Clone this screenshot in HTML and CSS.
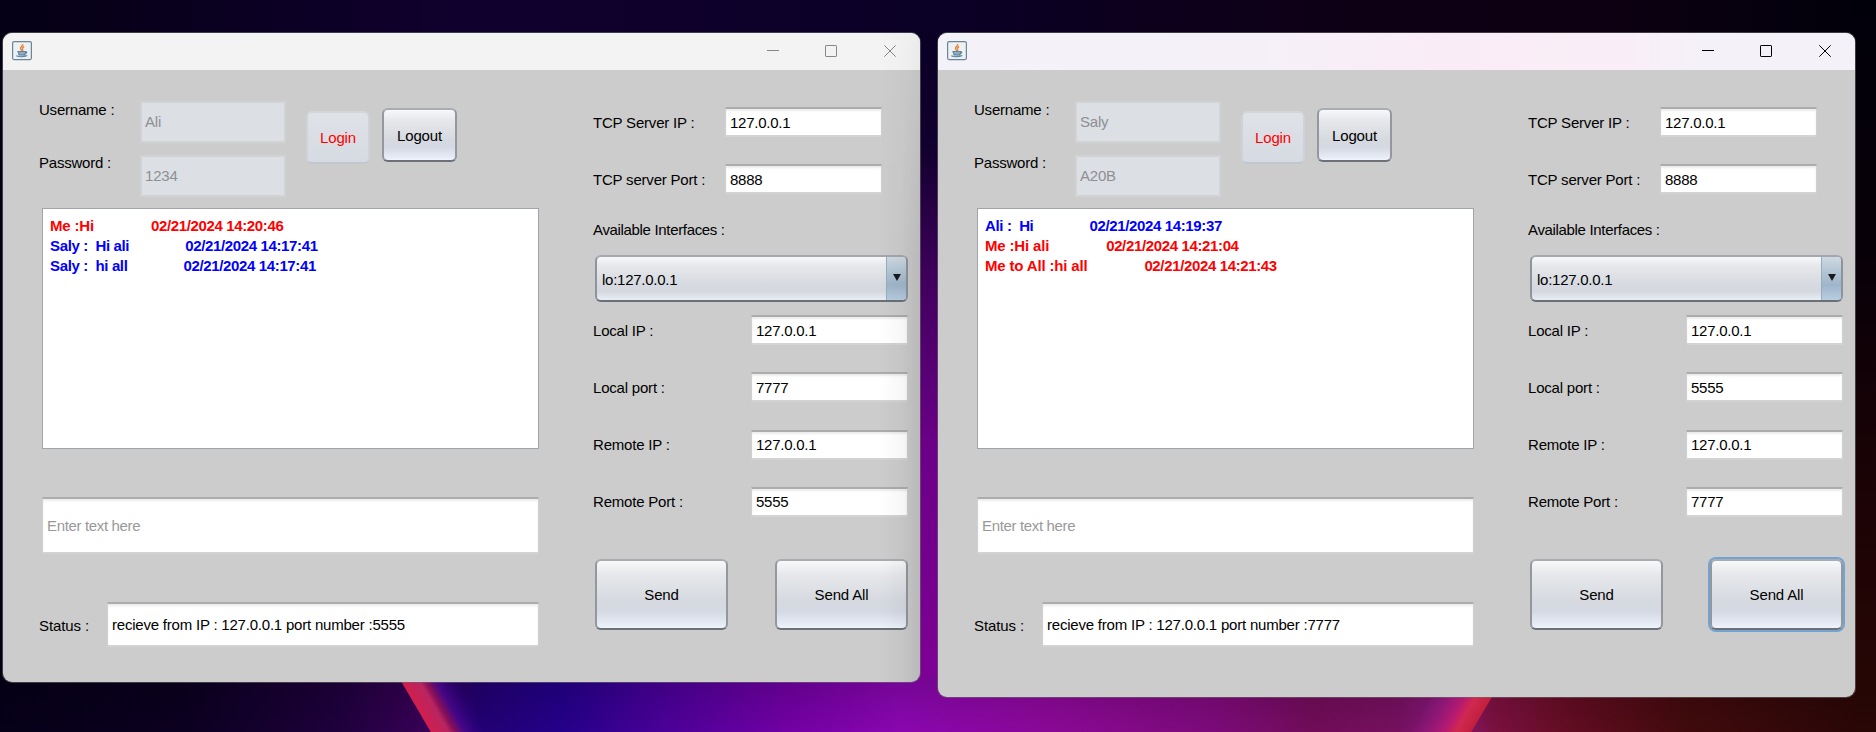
FILE: index.html
```html
<!DOCTYPE html>
<html lang="en">
<head>
<meta charset="utf-8">
<title>Chat</title>
<link rel="stylesheet" href="styles.css">
</head>
<body>
<svg class="wallpaper" width="1876" height="732" viewBox="0 0 1876 732" aria-hidden="true">
  <defs>
    <linearGradient id="top" gradientUnits="userSpaceOnUse" x1="0" x2="1876" y1="0" y2="0">
      <stop offset="0" stop-color="#050014"/><stop offset=".25" stop-color="#10002e"/>
      <stop offset=".5" stop-color="#0b0026"/><stop offset=".7" stop-color="#0d0016"/>
      <stop offset=".85" stop-color="#0d0012"/><stop offset="1" stop-color="#01000a"/>
    </linearGradient>
    <linearGradient id="gap" x1="0" x2="0" y1="0" y2="1">
      <stop offset="0" stop-color="#0a0024"/><stop offset=".18" stop-color="#12002e"/>
      <stop offset=".4" stop-color="#430060"/><stop offset=".65" stop-color="#6c0088"/>
      <stop offset="1" stop-color="#7d0094"/>
    </linearGradient>
    <linearGradient id="side" x1="0" x2="0" y1="0" y2="1">
      <stop offset="0" stop-color="#01000a"/><stop offset=".35" stop-color="#080008"/>
      <stop offset=".7" stop-color="#1d0305"/><stop offset="1" stop-color="#280705"/>
    </linearGradient>
    <linearGradient id="floor" gradientUnits="userSpaceOnUse" x1="0" x2="1876" y1="0" y2="0">
      <stop offset="0" stop-color="#060018"/><stop offset=".1" stop-color="#0b0020"/>
      <stop offset=".18" stop-color="#1e003c"/><stop offset=".23" stop-color="#3a0058"/>
      <stop offset=".255" stop-color="#220072"/><stop offset=".3" stop-color="#24008a"/>
      <stop offset=".35" stop-color="#480098"/><stop offset=".42" stop-color="#7200a4"/>
      <stop offset=".48" stop-color="#8a06b0"/><stop offset=".56" stop-color="#8a0896"/>
      <stop offset=".65" stop-color="#7c0a78"/><stop offset=".7" stop-color="#700c58"/>
      <stop offset=".745" stop-color="#75105f"/><stop offset=".775" stop-color="#8a1880"/>
      <stop offset=".795" stop-color="#7c1040"/><stop offset=".84" stop-color="#600c20"/>
      <stop offset=".9" stop-color="#400a0c"/><stop offset="1" stop-color="#280606"/>
    </linearGradient>
    <linearGradient id="shade" x1="0" x2="0" y1="0" y2="1">
      <stop offset="0" stop-color="#000" stop-opacity=".16"/><stop offset="1" stop-color="#000" stop-opacity="0"/>
    </linearGradient>
    <linearGradient id="arcLeft" gradientUnits="userSpaceOnUse" x1="415" y1="707" x2="461" y2="681">
      <stop offset="0" stop-color="#d41d4c"/><stop offset=".32" stop-color="#b82560"/>
      <stop offset=".42" stop-color="#8a1058"/><stop offset=".6" stop-color="#4a0890" stop-opacity=".8"/>
      <stop offset="1" stop-color="#240088" stop-opacity="0"/>
    </linearGradient>
    <linearGradient id="arcRight" gradientUnits="userSpaceOnUse" x1="1482" y1="716" x2="1430" y2="686">
      <stop offset="0" stop-color="#c01f3c"/><stop offset=".25" stop-color="#d02850"/>
      <stop offset=".4" stop-color="#b81a70"/><stop offset="1" stop-color="#7a1880" stop-opacity="0"/>
    </linearGradient>
  </defs>
  <rect width="1876" height="732" fill="url(#top)"/>
  <rect x="1850" y="0" width="26" height="732" fill="url(#side)"/>
  <rect y="676" width="1854" height="56" fill="url(#floor)"/>
  <rect y="676" width="1854" height="56" fill="url(#shade)"/>
  <rect x="912" y="33" width="34" height="644" fill="url(#gap)"/>
  <path d="M398 676 L432 734 H520 L486 676 Z" fill="url(#arcLeft)"/>
  <path d="M1495 692 L1470 734 H1410 L1435 692 Z" fill="url(#arcRight)"/>
</svg>

<main class="desktop">
  <section class="window window-ali">
    <header class="titlebar">
      <svg class="java" viewBox="0 0 20 20"><rect x=".6" y=".6" width="18.8" height="18" rx="1.5" fill="#eef1f3" stroke="#6d8494" stroke-width="1.2"/><path d="M10.8 3.2C11.2 5 7.8 5.700 8.500 7.700C8.800 8.500 9.600 9 9.700 10M12.200 5.500C10.500 6.200 9.900 7 10.700 8.200C11 8.800 10.800 9.400 10.300 9.900" fill="none" stroke="#e78335" stroke-width="1.400"/><path d="M6 10.500h7.500v1.500q0 2-2 2h-3q-2 0-2-2zM13.500 10.500c2.200 0 1.300 2-.8 2.400M4.300 14.800c2.500 1.300 8 1.200 11-.3" fill="#8fabc0" stroke="#5d86a3" stroke-width="1.100"/></svg>
      <div class="controls">
        <svg viewBox="0 0 12 12"><path d="M0 5.500h12"/></svg>
        <svg viewBox="0 0 12 12"><rect x=".5" y=".5" width="11" height="11" rx=".6"/></svg>
        <svg viewBox="0 0 12 12"><path d="M.3.300l11.400 11.400M11.700.3L.3 11.700"/></svg>
      </div>
    </header>
    <div class="content">
      <div class="left">
        <div class="account">
          <div class="names"><span>Username :</span><span>Password :</span></div>
          <div class="creds"><div class="field off">Ali</div><div class="field off">1234</div></div>
          <div class="btn login">Login</div>
          <div class="btn logout">Logout</div>
        </div>
        <div class="log">
          <p class="mine"><span>Me :Hi</span><time>02/21/2024 14:20:46</time></p>
          <p><span>Saly :  Hi ali</span><time>02/21/2024 14:17:41</time></p>
          <p><span>Saly :  hi all</span><time>02/21/2024 14:17:41</time></p>
        </div>
        <div class="field message">Enter text here</div>
        <div class="status"><span>Status :</span><div class="field">recieve from IP : 127.0.0.1 port number :5555</div></div>
      </div>
      <div class="right">
        <div class="row server"><span>TCP Server IP :</span><div class="field num">127.0.0.1</div></div>
        <div class="row server second"><span>TCP server Port :</span><div class="field num">8888</div></div>
        <div class="caption">Available Interfaces :</div>
        <div class="combo"><span class="num">lo:127.0.0.1</span><i><svg viewBox="0 0 9 8"><path d="M0 0h9L4.500 8z"/></svg></i></div>
        <div class="peers">
          <div class="row"><span>Local IP :</span><div class="field num">127.0.0.1</div></div>
          <div class="row"><span>Local port :</span><div class="field num">7777</div></div>
          <div class="row"><span>Remote IP :</span><div class="field num">127.0.0.1</div></div>
          <div class="row"><span>Remote Port :</span><div class="field num">5555</div></div>
        </div>
        <div class="actions"><div class="btn">Send</div><div class="btn">Send All</div></div>
      </div>
    </div>
  </section>

  <section class="window window-saly">
    <header class="titlebar">
      <svg class="java" viewBox="0 0 20 20"><rect x=".6" y=".6" width="18.8" height="18" rx="1.5" fill="#eef1f3" stroke="#6d8494" stroke-width="1.2"/><path d="M10.8 3.2C11.2 5 7.8 5.700 8.500 7.700C8.800 8.500 9.600 9 9.700 10M12.200 5.500C10.500 6.200 9.900 7 10.700 8.200C11 8.800 10.800 9.400 10.300 9.900" fill="none" stroke="#e78335" stroke-width="1.400"/><path d="M6 10.500h7.500v1.500q0 2-2 2h-3q-2 0-2-2zM13.500 10.500c2.200 0 1.300 2-.8 2.400M4.300 14.800c2.500 1.300 8 1.200 11-.3" fill="#8fabc0" stroke="#5d86a3" stroke-width="1.100"/></svg>
      <div class="controls">
        <svg viewBox="0 0 12 12"><path d="M0 5.500h12"/></svg>
        <svg viewBox="0 0 12 12"><rect x=".5" y=".5" width="11" height="11" rx=".6"/></svg>
        <svg viewBox="0 0 12 12"><path d="M.3.300l11.400 11.400M11.700.3L.3 11.700"/></svg>
      </div>
    </header>
    <div class="content">
      <div class="left">
        <div class="account">
          <div class="names"><span>Username :</span><span>Password :</span></div>
          <div class="creds"><div class="field off">Saly</div><div class="field off">A20B</div></div>
          <div class="btn login">Login</div>
          <div class="btn logout">Logout</div>
        </div>
        <div class="log">
          <p><span>Ali :  Hi</span><time>02/21/2024 14:19:37</time></p>
          <p class="mine"><span>Me :Hi ali</span><time>02/21/2024 14:21:04</time></p>
          <p class="mine"><span>Me to All :hi all</span><time>02/21/2024 14:21:43</time></p>
        </div>
        <div class="field message">Enter text here</div>
        <div class="status"><span>Status :</span><div class="field">recieve from IP : 127.0.0.1 port number :7777</div></div>
      </div>
      <div class="right">
        <div class="row server"><span>TCP Server IP :</span><div class="field num">127.0.0.1</div></div>
        <div class="row server second"><span>TCP server Port :</span><div class="field num">8888</div></div>
        <div class="caption">Available Interfaces :</div>
        <div class="combo"><span class="num">lo:127.0.0.1</span><i><svg viewBox="0 0 9 8"><path d="M0 0h9L4.500 8z"/></svg></i></div>
        <div class="peers">
          <div class="row"><span>Local IP :</span><div class="field num">127.0.0.1</div></div>
          <div class="row"><span>Local port :</span><div class="field num">5555</div></div>
          <div class="row"><span>Remote IP :</span><div class="field num">127.0.0.1</div></div>
          <div class="row"><span>Remote Port :</span><div class="field num">7777</div></div>
        </div>
        <div class="actions"><div class="btn">Send</div><div class="btn focused">Send All</div></div>
      </div>
    </div>
  </section>
</main>
</body>
</html>
```

FILE: styles.css
```css
* { box-sizing: border-box; }
body {
  margin: 0;
  width: 1876px;
  height: 732px;
  overflow: hidden;
  background: #0a0020;
  font: 15px/20px "Liberation Sans", Arial, sans-serif;
  color: #000;
}
.wallpaper { position: absolute; top: 0; left: 0; }
.desktop { position: relative; width: 1876px; height: 732px; }

/* windows placed freely on the desktop */
.window {
  position: absolute;
  top: 33px;
  width: 917px;
  border-radius: 9px;
  overflow: hidden;
  background: #ccc;
  box-shadow: 0 0 0 1px rgba(110, 110, 110, .55);
}
.window-ali { left: 3px; height: 649px; }
.window-saly { left: 938px; height: 664px; }
.window-ali::after {
  content: "";
  position: absolute;
  top: 0; right: 0; bottom: 0;
  width: 40px;
  background: linear-gradient(to right, transparent, rgba(0, 0, 0, .03) 55%, rgba(0, 0, 0, .09));
  mask-image: linear-gradient(rgba(0, 0, 0, .3), #000 35%);
}

.titlebar {
  display: flex;
  justify-content: space-between;
  height: 37px;
  padding: 8px 24px 0 9px;
  background: #f3f3f3;
}
.window-saly .titlebar { background: linear-gradient(to right, #f4f2f9, #f5f0f8 35%, #faecf6 55%, #f9eef7 75%, #f5f1f8 82%); }
.java { width: 20px; height: 20px; }
.controls { display: flex; padding-top: 4px; }
.controls svg { width: 12px; height: 12px; fill: none; stroke: #868686; }
.controls svg:nth-child(2) { margin: 0 47px 0 46px; }
.window-saly .controls svg { stroke: #000; }

.content { display: flex; justify-content: space-between; padding: 30px 12px 0 36px; }
.left { width: 500px; }
.right { width: 315px; padding-top: 7px; }

.field {
  display: flex;
  align-items: center;
  padding: 1px 0 0 4px;
  background: #fff;
  border: 1px solid #d0d0d0;
  border-top: 2px solid #acacac;
  border-bottom: 2px solid #d3d3d3;
  box-shadow: inset 0 2px 2px #ececec;
  white-space: nowrap;
  letter-spacing: -.21px;
}
.num { letter-spacing: -.26px; }
.off {
  background: #dce0e5;
  border: 2px solid #d0d2d4;
  box-shadow: none;
  color: #8e8f91;
  padding: 0 0 0 3px;
}

.btn {
  display: flex;
  align-items: center;
  justify-content: center;
  padding-top: 2px;
  border: 2px solid;
  border-color: #a9adb2 #94979d #6c7077;
  border-radius: 6px;
  background: linear-gradient(#f7f8fa, #e6e8eb 20%, #d6d9df 60%, #d5d9e3 75%, #e6eaf4 93%, #f0f3fb);
  letter-spacing: -.15px;
}

.account { display: flex; height: 108px; }
.names { display: grid; grid-auto-rows: 53px; width: 100px; letter-spacing: -.22px; }
.creds { display: flex; flex-direction: column; gap: 12px; width: 146px; margin: 1px 0 0 1px; }
.creds .field { flex: none; height: 42px; }
.login {
  width: 64px;
  height: 53px;
  margin: 11px 0 0 20px;
  padding-top: 0;
  border-color: #d4d6da #cfd2d8 #c2c6cd;
  background: linear-gradient(#dfe2e7, #d6dae2);
  color: #f00;
}
.logout { width: 75px; height: 54px; margin: 8px 0 0 12px; }

.log {
  height: 241px;
  margin-left: 3px;
  padding: 7px;
  background: #fff;
  border: 1px solid #a0a4ab;
  font-weight: 700;
  color: #00f;
}
.log p { margin: 0; white-space: pre; letter-spacing: -.36px; }
.log time { margin-left: 56px; letter-spacing: -.36px; }
.log .mine { color: #f00; letter-spacing: -.17px; }
.log .mine time { margin-left: 57px; }

.message { height: 57px; margin: 48px 0 0 3px; color: #999; letter-spacing: -.35px; }
.status { display: flex; align-items: center; height: 45px; margin-top: 48px; letter-spacing: -.1px; }
.status > span { width: 68px; padding-top: 2px; }
.status .field { flex: 1; height: 45px; }

.row { display: flex; align-items: center; justify-content: space-between; height: 30px; }
.row > span, .caption { letter-spacing: -.2px; }
.row > span { padding-top: 1px; }
.row .field { width: 157px; height: 30px; }
.server { padding-right: 26px; }
.second { margin-top: 27px; }
.caption { margin-top: 26px; letter-spacing: -.33px; }
.combo {
  display: flex;
  align-items: center;
  justify-content: space-between;
  height: 47px;
  margin: 15px 0 0 2px;
  padding-left: 5px;
  border: 2px solid;
  border-color: #a4a8ae #8e949c #687079;
  border-radius: 6px;
  background: linear-gradient(#f7f8fa, #e6e8eb 20%, #d6d9df 65%, #d5d9df 80%, #e9edf4);
  overflow: hidden;
}
.combo span { padding-top: 2px; }
.combo i {
  display: grid;
  place-items: center;
  width: 20px;
  height: 100%;
  padding-bottom: 2px;
  border-left: 1px solid #94adc0;
  background: linear-gradient(#ced9e3, #b2c5d4 35%, #9fb5c9 65%, #b7cde0);
}
.combo i svg { width: 8px; height: 7px; fill: #17191c; }
.peers { display: grid; row-gap: 27.300px; margin-top: 13px; }
.actions { display: flex; justify-content: space-between; margin: 42px 0 0 2px; }
.actions .btn { width: 133px; height: 71px; }
.actions .focused { box-shadow: 0 0 0 2px #73a4d1; }
```
